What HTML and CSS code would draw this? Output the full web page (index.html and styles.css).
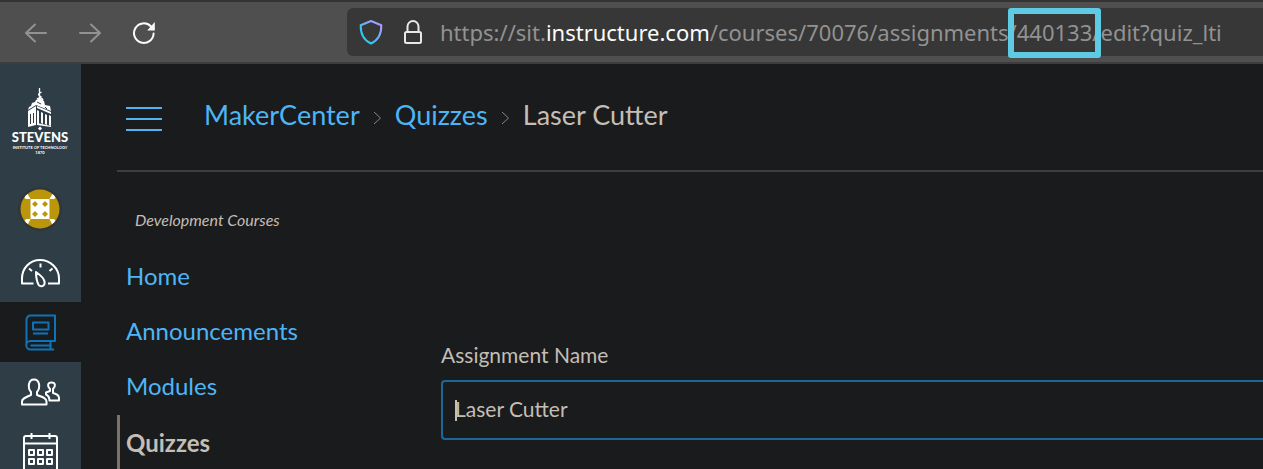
FILE: index.html
```html
<!DOCTYPE html>
<html lang="en">
<head>
<meta charset="utf-8">
<meta name="viewport" content="width=device-width, initial-scale=1">
<title>Laser Cutter</title>
<link rel="stylesheet" href="styles.css">
</head>
<body>
<header class="toolbar">
  <div class="history">
    <button class="tool dim" aria-label="Back"><svg width="24" height="24" viewBox="0 0 24 24"><path d="M22 12H2M11 3.500L2 12l9 8.500"/></svg></button>
    <button class="tool dim" aria-label="Forward"><svg width="24" height="24" viewBox="0 0 24 24"><path d="M2 12h20M13 3.500L22 12l-9 8.500"/></svg></button>
    <button class="tool" aria-label="Reload"><svg width="24" height="24" viewBox="0 0 24 24"><path d="M21.600 12.500A9.800 9.800 0 1 1 18.800 5.300"/><path class="solid" d="M22.800 1v8.600h-7.600l2.700-3.200z"/></svg></button>
  </div>
  <div class="address">
    <svg width="24" height="26" viewBox="0 0 24 26"><defs><linearGradient id="shield" x1="0" y1="1" x2="1" y2="0"><stop offset=".25" stop-color="#2ec8f2"/><stop offset=".85" stop-color="#a99bff"/></linearGradient></defs><path d="M12 2L22.300 6.200C22.500 15 19.500 21 12 24.500C4.500 21 1.500 15 1.700 6.200Z" fill="none" stroke="url(#shield)" stroke-width="2" stroke-linejoin="round"/></svg>
    <svg class="lock" width="20" height="26" viewBox="0 0 20 26"><rect x="2" y="13" width="16" height="11" rx="1.500"/><path d="M4.500 13V7.500a5.500 5.500 0 0 1 11 0V13"/></svg>
    <div class="url" role="textbox" aria-label="Address" contenteditable="true" spellcheck="false">https://sit.<span class="domain">instructure.com</span>/courses/70076/assignments/<span class="marked">440133</span>/edit?quiz_lti</div>
  </div>
</header>
<div class="app">
  <nav class="rail" aria-label="Global">
    <a class="logo" href="#" aria-label="Stevens Institute of Technology">
      <svg width="60" height="72" viewBox="0 0 60 72">
        <path d="M29.500 0v11M31.500 4c-4 2-4 3 0 5M27 11c3-2 5-1 6 1" fill="none" stroke="#fff" stroke-width="1.300"/>
        <g fill="#fff">
          <path d="M26 12l4-2 4 3 1 4 5 1 1 5-15-6-8 5 1-3 2-1 1-3 3-1z"/>
          <path d="M18 23l8-5v19l-8 2zM27 18l14 6v2l-14-6z"/>
          <path d="M27 22l2 1v13l-2 1zM31 24l2 1v11l-2-1zM35 26l2 1v10l-2-1zM39 27l2 1v10l-2-1zM27 35l14 3v1l-14-2z"/>
          <path d="M30 38.500l2 2-2 2-2-2z"/>
        </g>
        <path d="M20.500 26v10M23.500 25v10M27 14l4 2M35 19l2 2" stroke="#2f3d47" stroke-width="1"/>
        <text class="logo-name" x="30" y="54" text-anchor="middle">STEVENS</text>
        <text class="logo-sub" x="30" y="61" text-anchor="middle">INSTITUTE OF TECHNOLOGY</text>
        <text class="logo-sub" x="30" y="66" text-anchor="middle">1870</text>
      </svg>
    </a>
    <a class="rail-item account" href="#" aria-label="Account">
      <svg width="44" height="44" viewBox="0 0 44 44"><defs><clipPath id="avatar"><circle cx="22" cy="22" r="19.500"/></clipPath></defs><circle cx="22" cy="22" r="22" fill="#30363a"/><g clip-path="url(#avatar)"><path fill="#bb960b" d="M0 0h44v44H0z"/><path fill="#fff" d="M12.500 12h19v20h-19zM5 9l4-3 3.500 6H8zM39 9l-4-3-3.500 6H36zM5 36l4 3 3.500-7H8zM39 36l-4 3-3.500-7H36z"/><g fill="#bb960b"><path d="M17 14l3 3-3 3-3-3zM27 14l3 3-3 3-3-3zM17 24l3 3-3 3-3-3zM27 24l3 3-3 3-3-3z"/></g></g></svg>
    </a>
    <a class="rail-item" href="#" aria-label="Dashboard">
      <svg class="line" width="40" height="40" viewBox="0 0 40 40"><path d="M13.500 31.500H2v-5C2 16.500 9.500 8 20 8s19 8.500 19 18.500v5H28M20.500 11.500v4M9 16.500l3 2.500M32.500 16.500l-3 2.500M16 20c5 3.500 8.500 7 8.500 10a3.300 3.300 0 0 1-6.300 2C17 29.500 16 25.500 16 20z"/></svg>
    </a>
    <a class="rail-item active" href="#" aria-label="Courses">
      <svg class="line" width="40" height="40" viewBox="0 0 40 40"><path d="M6.500 33V7.500a4 4 0 0 1 4-4H35V29H10.500a4 4 0 0 0 0 8.500H34M30.500 29v8M10.500 33.500h19"/><rect x="13" y="10.500" width="15.500" height="7"/><path d="M13 21.500h15"/></svg>
    </a>
    <a class="rail-item" href="#" aria-label="Groups">
      <svg class="line" width="40" height="40" viewBox="0 0 40 40"><path d="M2 32.500v-3c0-3 3-4 9-6.500v-3C7.500 16 8 7.500 14 7.500S20.500 16 17 20v3c7 2.500 9.500 3.500 9.500 6.500v3zM26 20.500l4-1.500v-2c-3-3-2.500-6.500 1.500-6.500s4.500 3.500 1.500 6.500v4c4 1 6 2 6 5v2.500H29.500c0-3.500-1.500-5-3.500-6z"/></svg>
    </a>
    <a class="rail-item" href="#" aria-label="Calendar">
      <svg class="line" width="40" height="40" viewBox="0 0 40 40"><rect x="4" y="4" width="33" height="35" rx="2"/><path d="M4 11.500h33M11.500 1v6M29.500 1v6"/><path d="M9 18h5v5H9zM18 18h5v5h-5zM27 18h5v5h-5zM9 27h5v5H9zM18 27h5v5h-5zM27 27h5v5h-5z"/></svg>
    </a>
  </nav>
  <div class="page">
    <div class="crumb-bar">
      <button class="menu" aria-label="Course navigation"><span></span><span></span><span></span></button>
      <nav class="crumbs" aria-label="Breadcrumb">
        <a href="#">MakerCenter</a>
        <svg width="9" height="14" viewBox="0 0 9 14"><path d="M1 1l6.500 6L1 13"/></svg>
        <a href="#">Quizzes</a>
        <svg width="9" height="14" viewBox="0 0 9 14"><path d="M1 1l6.500 6L1 13"/></svg>
        <span>Laser Cutter</span>
      </nav>
    </div>
    <div class="columns">
      <nav class="course-nav" aria-label="Course">
        <p class="term">Development Courses</p>
        <a href="#">Home</a>
        <a href="#">Announcements</a>
        <a href="#">Modules</a>
        <a class="current" href="#">Quizzes</a>
      </nav>
      <main class="form">
        <label for="assignment-name">Assignment Name</label>
        <div class="field"><input id="assignment-name" type="text" value="Laser Cutter"></div>
      </main>
    </div>
  </div>
</div>
</body>
</html>
```
FILE: styles.css
```css
* { box-sizing: border-box; }
body {
  margin: 0;
  height: 100vh;
  display: flex;
  flex-direction: column;
  overflow: hidden;
  background: #1a1b1d;
  color: #c4beb5;
  font-family: Lato, sans-serif;
}
a { color: #4db5f5; text-decoration: none; }
button { background: none; border: 0; padding: 0; }
svg { display: block; flex: none; }

.toolbar {
  display: flex;
  align-items: center;
  flex: none;
  height: 64px;
  padding-left: 24px;
  background: #4f4f4f;
  border-top: 2px solid #333;
  border-bottom: 2px solid #3d3d3d;
}
.history { display: flex; gap: 30px; flex: none; width: 323px; padding-top: 2px; }
.tool svg { fill: none; stroke: #fbfbfb; stroke-width: 2; stroke-linecap: round; stroke-linejoin: round; }
.tool.dim svg { stroke: #929292; }
.tool .solid { fill: #fbfbfb; stroke: none; }
.address {
  display: flex;
  align-items: center;
  flex: 1;
  min-width: 0;
  height: 48px;
  padding-left: 12px;
  background: #373737;
  border-radius: 6px 0 0 6px;
}
.lock { margin: 0 17px 0 20px; fill: none; stroke: #e8e8e8; stroke-width: 2; }
.url {
  font-family: "Noto Sans", sans-serif;
  font-size: 22px;
  line-height: 32px;
  white-space: nowrap;
  color: #929292;
  outline: 0;
}
.domain { color: #fbfbfb; }
.marked { position: relative; }
.marked::after {
  content: "";
  position: absolute;
  inset: -9px -9px -11px;
  border: 6px solid #5ccbe3;
  border-radius: 3px;
}

.app { display: flex; flex: 1; min-height: 0; }
.rail { flex: none; width: 81px; overflow: hidden; background: #2f3d47; }
.logo { display: flex; justify-content: center; padding: 24px 1px 16px 0; }
.logo-name { fill: #fff; font-size: 13px; font-weight: 900; }
.logo-sub { fill: #fff; font-size: 4px; font-weight: 700; }
.rail-item { display: flex; align-items: center; justify-content: center; height: 60px; padding-right: 1px; }
.account { height: 66px; }
.line { fill: none; stroke: #fff; stroke-width: 2; stroke-linejoin: round; }
.active { background: #1a1b1d; }
.active .line { stroke: #0e74b8; }

.page { flex: 1; min-width: 0; padding-left: 36px; }
.crumb-bar {
  display: flex;
  align-items: center;
  height: 108px;
  padding-left: 9px;
  border-bottom: 2px solid #3a4040;
}
.menu { display: grid; gap: 9px; width: 36px; padding-top: 3px; }
.menu span { height: 2px; background: #4db5f5; }
.crumbs {
  display: flex;
  align-items: center;
  gap: 13px;
  margin-left: 42px;
  padding-bottom: 4px;
  font-size: 27px;
  line-height: 36px;
}
.crumbs svg { margin-top: 6px; fill: none; stroke: #8a857f; stroke-width: 1; }
.columns { display: flex; }
.course-nav { flex: none; width: 324px; padding-top: 36px; font-size: 24px; }
.term { margin: 0 0 16px 18px; font-size: 16px; font-style: italic; line-height: 24px; }
.course-nav a { display: block; padding-left: 6px; border-left: 3px solid transparent; line-height: 55px; }
.course-nav .current { margin-top: 2px; border-color: #7c7265; color: #c4beb5; font-weight: 700; }
.form { flex: 1; min-width: 0; padding-top: 168px; }
.form label { display: block; margin-bottom: 10px; font-size: 21px; line-height: 30px; }
.field { position: relative; }
.field::before {
  content: "";
  position: absolute;
  left: 14px;
  top: 20px;
  width: 2px;
  height: 21px;
  background: #c4beb5;
}
.field input {
  display: block;
  width: 100%;
  height: 60px;
  padding: 0 14px 4px 12px;
  background: transparent;
  border: 2px solid #1a6799;
  border-right: 0;
  border-radius: 4px 0 0 4px;
  outline: 0;
  color: #c4beb5;
  font: 21px Lato, sans-serif;
}
```
